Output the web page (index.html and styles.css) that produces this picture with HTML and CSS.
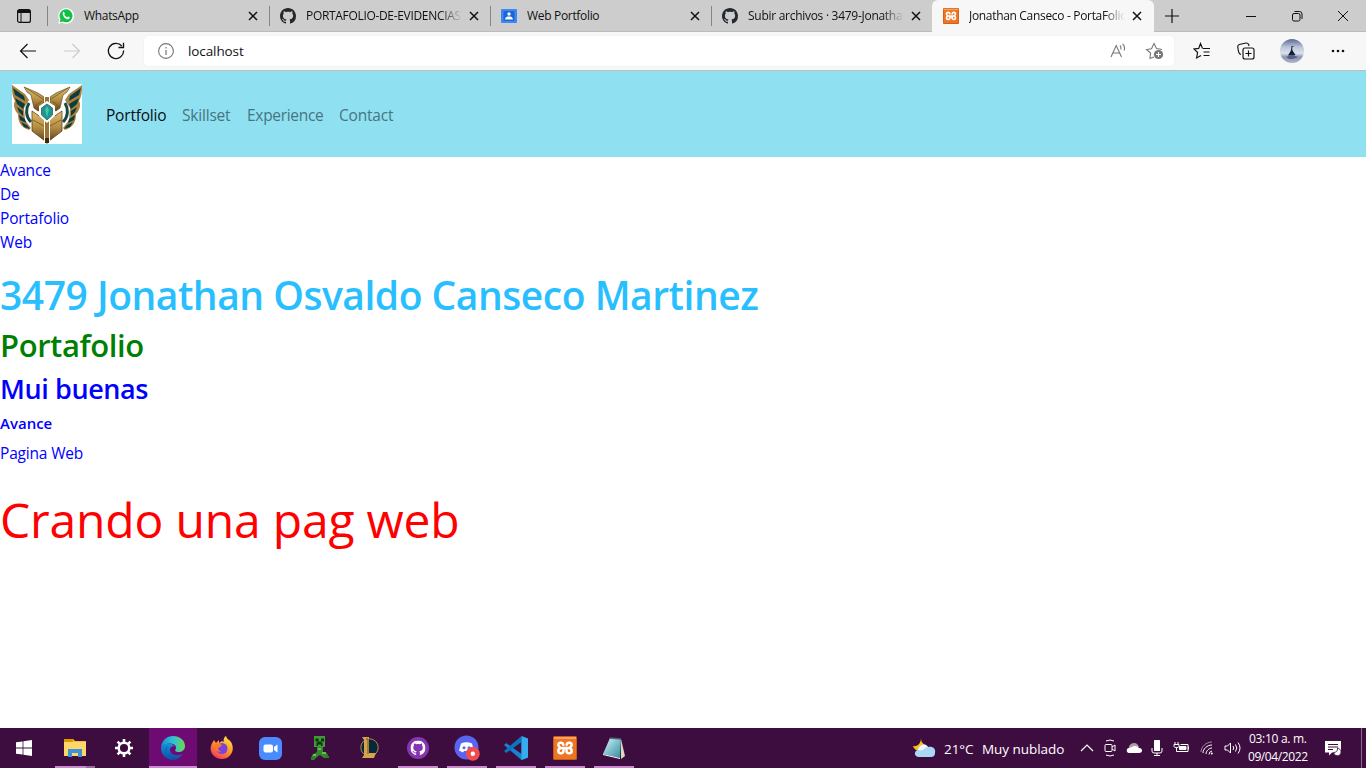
FILE: index.html
```html
<!DOCTYPE html>
<html lang="es">
<head>
<meta charset="utf-8">
<title>Jonathan Canseco - PortaFolio</title>
<link rel="stylesheet" href="styles.css">
</head>
<body>
<svg class="defs" width="0" height="0">
  <defs>
    <symbol id="github" viewBox="0 0 16 16"><path d="M8 0C3.58 0 0 3.58 0 8c0 3.54 2.29 6.53 5.47 7.59.4.07.55-.17.55-.38 0-.19-.01-.82-.01-1.49-2.01.37-2.53-.49-2.69-.94-.09-.23-.48-.94-.82-1.13-.28-.15-.68-.52-.01-.53.63-.01 1.08.58 1.23.82.72 1.21 1.87.87 2.33.66.07-.52.28-.87.51-1.07-1.78-.2-3.64-.89-3.64-3.95 0-.87.31-1.59.82-2.15-.08-.2-.36-1.02.08-2.12 0 0 .67-.21 2.2.82.64-.18 1.32-.27 2-.27s1.36.09 2 .27c1.53-1.04 2.2-.82 2.2-.82.44 1.1.16 1.92.08 2.12.51.56.82 1.27.82 2.15 0 3.07-1.87 3.75-3.65 3.95.29.25.54.73.54 1.48 0 1.07-.01 1.93-.01 2.2 0 .21.15.46.55.38A8.01 8.01 0 0 0 16 8c0-4.42-3.58-8-8-8z"/></symbol>
    <symbol id="close" viewBox="0 0 10 10"><path d="M1 1l8 8M9 1l-8 8" fill="none" stroke="#111" stroke-width="1.5"/></symbol>
    <symbol id="xampp" viewBox="0 0 24 24"><rect width="24" height="24" rx="1.500" fill="#c9581a"/><rect x="1" y="1" width="22" height="22" rx="1" fill="#ee7623"/><path d="M1 1h22v2H1z" fill="#f7a266"/><path d="M9.500 12h5M10.300 8.700C9.800 5.800 5 6.100 5.300 9c.2 1.700 1.200 2.300 2.600 3-2 .5-2.700 1.600-2.600 3.100.3 3 5.200 2.900 5.200-.3V12M13.700 8.700c.5-2.900 5.300-2.600 5 .3-.2 1.700-1.200 2.300-2.600 3 2 .5 2.700 1.600 2.600 3.100-.3 3-5.200 2.900-5.200-.3V12" fill="none" stroke="#fff" stroke-width="2.500" stroke-linejoin="round" stroke-linecap="round"/></symbol>
  </defs>
</svg>
<div class="screen">
  <div class="tabstrip">
    <div class="tabmenu"><svg width="14" height="14" viewBox="0 0 14 14"><rect x=".6" y=".6" width="12.800" height="12.800" rx="2" fill="none" stroke="#111" stroke-width="1.200"/><path d="M1 1h12v3H1z" fill="#111"/><path d="M4 4v9" stroke="#111"/></svg></div>
    <div class="tab first">
      <svg class="fav" viewBox="0 0 16 16"><path d="M.3 15.800l1-4A7.900 7.900 0 1 1 4.300 14.800z" fill="#fff"/><path d="M1.700 14.300l.8-3A6.500 6.500 0 1 1 4.800 13.500z" fill="#12c143"/><path d="M5 4.200c.4-.5 1-.4 1.200 0l.6 1.400c.1.400-.6 1-.5 1.200.7 1.300 1.500 2 2.700 2.500.4 0 .8-1 1.200-.8l1.500.8c.2.700-.4 1.800-1.600 2C7.500 11.500 3.500 7.400 5 4.200z" fill="#fff"/></svg>
      <span class="label">WhatsApp</span><svg class="x"><use href="#close"/></svg>
    </div>
    <div class="tab">
      <svg class="fav" fill="#24292f"><use href="#github"/></svg>
      <span class="label fade">PORTAFOLIO-DE-EVIDENCIAS</span><svg class="x"><use href="#close"/></svg>
    </div>
    <div class="tab">
      <svg class="fav" viewBox="0 0 16 16"><rect y="1" width="16" height="14" rx="1" fill="#4285f4"/><path d="M2.500 3h11v10h-11z" fill="#1967d2"/><circle cx="8" cy="6" r="1.700" fill="#fff"/><path d="M4 11.500c.3-2.500 2-3 4-3s3.700.5 4 3z" fill="#fff"/></svg>
      <span class="label">Web Portfolio</span><svg class="x"><use href="#close"/></svg>
    </div>
    <div class="tab last">
      <svg class="fav" fill="#24292f"><use href="#github"/></svg>
      <span class="label fade wide">Subir archivos · 3479-Jonatha</span><svg class="x"><use href="#close"/></svg>
    </div>
    <div class="tab active">
      <svg class="fav"><use href="#xampp"/></svg>
      <span class="label fade">Jonathan Canseco - PortaFolio</span><svg class="x"><use href="#close"/></svg>
    </div>
    <svg class="plus" width="16" height="16" viewBox="0 0 16 16"><path d="M8 1v14M1 8h14" stroke="#111" stroke-width="1.200"/></svg>
    <div class="winbtns">
      <svg width="12" height="12" viewBox="0 0 12 12"><path d="M1 6.500h10" stroke="#111"/></svg>
      <svg width="12" height="12" viewBox="0 0 12 12" fill="none" stroke="#111"><rect x="1.500" y="3.500" width="7.500" height="7.500" rx="1.500"/><path d="M3.500 1.500h5q2.500 0 2.500 2.500v5"/></svg>
      <svg width="12" height="12" viewBox="0 0 12 12"><path d="M1 1l10 10M11 1L1 11" stroke="#111"/></svg>
    </div>
  </div>

  <div class="toolbar">
    <div class="navicons">
      <svg width="18" height="16" viewBox="0 0 18 16" fill="none" stroke="#111" stroke-width="1.200"><path d="M8.500 1L1.500 8l7 7M1.500 8H17"/></svg>
      <svg width="18" height="16" viewBox="0 0 18 16" fill="none" stroke="#ccc" stroke-width="1.200"><path d="M9.500 1l7 7-7 7M16.500 8H1"/></svg>
      <svg width="18" height="18" viewBox="0 0 18 18" fill="none" stroke="#111" stroke-width="1.300"><path d="M16.600 8.500A7.600 7.600 0 1 1 14.800 4M16.500 .8v4.700h-5"/></svg>
    </div>
    <div class="address">
      <svg width="16" height="16" viewBox="0 0 16 16"><circle cx="8" cy="8" r="7.400" fill="none" stroke="#777" stroke-width="1.100"/><path d="M8 7v5M8 4v1.500" stroke="#777" stroke-width="1.200"/></svg>
      <span class="url">localhost</span>
      <svg class="read" width="17" height="16" viewBox="0 0 17 16" fill="none" stroke="#777" stroke-width="1.100"><path d="M1 14L6.200 2.500 11.500 14M3 10h6.700M10 2.500q1.500 1.500.8 4M12.500.8q3 2.800 1.600 6.800"/></svg>
      <svg class="staradd" width="20" height="18" viewBox="0 0 20 18" fill="none" stroke="#777" stroke-width="1.100"><path d="M9 15l-4 1.500.5-5.500L1.500 7.500l5-.8L9 1.500l2.500 5 5.500 1"/><circle cx="13.500" cy="12.500" r="4.600" fill="#777" stroke="none"/><path d="M11 12.500h5M13.500 10v5" stroke="#fff"/></svg>
    </div>
    <div class="tools">
      <svg width="18" height="18" viewBox="0 0 18 18" fill="none" stroke="#111" stroke-width="1.150"><path d="M9.500 6.500L7.500 1.500 5.700 6.400 1 7l3.600 3.500-1 5.500L8 13.500M10 6.500h7M10.500 10h6M10.500 13.500h6"/></svg>
      <svg width="18" height="18" viewBox="0 0 18 18" fill="none" stroke="#111" stroke-width="1.150"><rect x="6" y="6" width="11" height="11" rx="2"/><path d="M11.500 8.500v6M8.500 11.500h6M4 12.500C2 12 1.500 10 1.200 8L.8 5q-.2-2 1.500-2.500L9 1q2-.2 2.600 1.500l.5 1.500"/></svg>
      <svg class="avatar" width="24" height="24" viewBox="0 0 24 24"><defs><linearGradient id="sky" x2="0" y2="1"><stop stop-color="#5c6a94"/><stop offset=".35" stop-color="#bdc7dc"/><stop offset=".6" stop-color="#dce0ea"/><stop offset=".75" stop-color="#8d96b2"/><stop offset="1" stop-color="#adb4ca"/></linearGradient></defs><circle cx="12" cy="12" r="12" fill="url(#sky)"/><path d="M11.500 7l2.500.5-2 1 .5 3 3 4.500-7.500.500 3-5z" fill="#131b33"/><path d="M6 18l6-2.500 6 2.500-5 2H9z" fill="#56618a"/></svg>
      <svg width="14" height="4" viewBox="0 0 14 4" fill="#111"><circle cx="2" cy="2" r="1.300"/><circle cx="7" cy="2" r="1.300"/><circle cx="12" cy="2" r="1.300"/></svg>
    </div>
  </div>

  <nav class="navbar">
    <svg class="logo" width="70" height="60" viewBox="0 0 70 60">
      <defs><linearGradient id="gold" x2="0" y2="1"><stop stop-color="#dfbd6c"/><stop offset=".55" stop-color="#b38c42"/><stop offset="1" stop-color="#61431a"/></linearGradient></defs>
      <path d="M0 0h70v60H0z" fill="#fff"/>
      <g id="wing">
        <path d="M0 1l13 9 4 6-5 8 1 12 6 8-2 2C8 43 6 37 6 30 2 26 1 20 3 17 0 12 0 6 0 1z" fill="#ab8140"/>
        <path d="M1 4l11 8 1 5L3 11zM3 14l10 6-2 5L5 20zM5 23l6 4v5L7 28zM7 31l6 4 1 4-6-3zM9 38l6 3 3 4-6-2z" fill="#0b3d3e"/>
        <path d="M17 19c-3 5-4 13 2 19" fill="none" stroke="#174946" stroke-width="3"/>
        <path d="M12 3l14 6 6 4v11l-6 3-4-3-3-13-4-3z" fill="url(#gold)" stroke="#493719" stroke-width=".6"/>
        <path d="M20 27l13 9v21L20 47z" fill="url(#gold)" stroke="#49300f" stroke-width=".7"/>
        <path d="M21 36l11 6M14 4l14 9 4 3M22 23l8-6" fill="none" stroke="#755622" stroke-width=".8"/>
      </g>
      <use href="#wing" transform="matrix(-1 0 0 1 70 0)"/>
      <path d="M32 10h6v8h-6zM32 36h6v21l-3 3-3-3z" fill="#fff"/><path d="M33 13h4v45l-2 2-2-2z" fill="#9b7434"/>
      <path d="M18 23l17 13 17-13" fill="none" stroke="#fff" stroke-width="1.500"/>
      <path d="M35 17l8 5v10l-8 7-8-7V22z" fill="#fff"/><path d="M35 20l5.500 4v7L35 36l-5.500-5v-7z" fill="#169a8f" stroke="#52706a"/><path d="M35 22l2 4-2 7-2-7z" fill="#4cc0ad"/><path d="M33 54h4v5h-4z" fill="#3d2912"/>
    </svg>
    <span class="navlink on n1">Portfolio</span><span class="navlink n2">Skillset</span><span class="navlink n3">Experience</span><span class="navlink n4">Contact</span>
  </nav>

  <main class="page">
    <p class="intro">Avance<br>De<br>Portafolio<br>Web</p>
    <h1>3479 Jonathan Osvaldo Canseco Martinez</h1>
    <h2>Portafolio</h2>
    <h3>Mui buenas</h3>
    <h6>Avance</h6>
    <p class="sub">Pagina Web</p>
    <p class="big">Crando una pag web</p>
  </main>

  <footer class="taskbar">
    <div class="apps">
      <div class="app"><svg width="16" height="16" viewBox="0 0 16 16" fill="#fff"><path d="M0 2.300L6.600 1.400v6.200H0zM7.400 1.300L16 0v7.600H7.400zM0 8.400h6.600v6.200L0 13.700zM7.400 8.400H16V16l-8.600-1.300z"/></svg></div>
      <div class="app run files"><svg width="22" height="20" viewBox="0 0 22 20"><path d="M0 1h9l2 2h11v15H0z" fill="#f5bd3b"/><path d="M0 1h9.500l-1 3H0z" fill="#df9800"/><path d="M0 4h22v14H0z" fill="#ffd768"/><path d="M4 19v-8h14v8h-4v-4H8v4z" fill="#3b94db"/></svg></div>
      <div class="app"><svg width="20" height="20" viewBox="0 0 20 20"><circle cx="10" cy="10" r="5.300" fill="none" stroke="#fff" stroke-width="2.500"/><path d="M10 1v4M10 15v4M1 10h4M15 10h4M3.600 3.600l3 3M13.400 13.400l3 3M16.400 3.600l-3 3M6.600 13.400l-3 3" stroke="#fff" stroke-width="2.600"/></svg></div>
      <div class="app run edge"><svg width="24" height="24" viewBox="0 0 24 24"><defs><linearGradient id="e1" x2="1"><stop stop-color="#178fcd"/><stop offset=".5" stop-color="#31bfd9"/><stop offset="1" stop-color="#6bd94b"/></linearGradient><linearGradient id="e2" x2="0" y2="1"><stop stop-color="#1594dc"/><stop offset="1" stop-color="#0d4ca3"/></linearGradient></defs><path d="M0 12C.5 4 6 0 12 0c7 0 12 4.500 12 10 0 4-3 6-6.500 6-3 0-4-1.200-3-2.500 1.500-2 0-6-5-6C5 7.500 1 9 0 12z" fill="url(#e1)"/><path d="M0 12c1-3.500 5-5 8.500-4.500 2.500.3 4.500 1.500 5 3-2.500-1-4.500 1-4.500 3.500 0 4 5 7 12.500 4C19 22 15.500 24 12 24 5 24 0 19 0 12z" fill="url(#e2)"/><path d="M7.500 9.500C4 13 5.500 21 12 24 4 22 2 12 7.500 9.500z" fill="#1263b5"/></svg></div>
      <div class="app"><svg width="24" height="24" viewBox="0 0 24 24"><defs><linearGradient id="ff" x1=".8" x2=".2" y2="1"><stop stop-color="#ffe742"/><stop offset=".45" stop-color="#ff9a26"/><stop offset="1" stop-color="#f4315d"/></linearGradient></defs><path d="M4 4l2 3 3-3v3c2-2 4-2 5-1-1-2 0-5 2-6 1 4 5 4 6 8 3 8-3 15-10 15S-1 17 1 10c.5-2.500 2-4 3-6z" fill="url(#ff)"/><circle cx="12" cy="12.500" r="5.500" fill="#7a42d8"/><path d="M5 8c3-1 6 0 7 1-1 2-3 2-4 3 0 2 2 4 4 4-5 1-8-4-7-8z" fill="#ff792e"/></svg></div>
      <div class="app"><svg width="23" height="23" viewBox="0 0 23 23"><rect width="23" height="23" rx="6" fill="#4a8cff"/><rect x="4.500" y="7.500" width="9.500" height="8" rx="2" fill="#fff"/><path d="M15 10l3.500-2.500v8L15 13z" fill="#fff"/></svg></div>
      <div class="app"><svg width="20" height="24" viewBox="0 0 20 24"><path d="M4 0h11v11H4z" fill="#3c9d35"/><path d="M5.500 2.500h3v3h-3zM11 2.500h3v3h-3zM8 5.500h3v1h1.500V10H11V8.500H8V10H6.500V6.500H8z" fill="#102c11"/><path d="M7 11h6v5l5 2-1 4h-3l-4-3-3 2-3 3H1l1-5 5-3z" fill="#35862e"/><path d="M3 19h3M12 17h4M8 13h3" stroke="#67bf51" stroke-width="2"/><path d="M1 22h4M15 21h4" stroke="#2f7d2d" stroke-width="2"/></svg></div>
      <div class="app"><svg width="20" height="22" viewBox="0 0 20 22"><circle cx="10.500" cy="10.500" r="8.700" fill="#07273a" stroke="#b58e43" stroke-width="1"/><path d="M3 0h7v16h7l-2 5H3l2-3V3z" fill="#d4a54d"/><path d="M7 2h2v15" fill="none" stroke="#765222"/></svg></div>
      <div class="app run"><svg width="22" height="22" viewBox="0 0 22 22"><circle cx="11" cy="11" r="11" fill="#8635b1"/><g fill="#fff"><use href="#github" x="3.500" y="3.500" width="15" height="15"/></g></svg></div>
      <div class="app run"><svg width="26" height="26" viewBox="0 0 26 26"><circle cx="12.500" cy="12.500" r="12" fill="#5865f2"/><path d="M7 8.500q5.500-2.500 11 0l2 7-4 2-1-1.500h-5L9 17.500l-4-2z" fill="#fff"/><circle cx="10" cy="12.700" r="1.500" fill="#5865f2"/><circle cx="15" cy="12.700" r="1.500" fill="#5865f2"/><circle cx="18.800" cy="18.800" r="7" fill="#ed4f50"/><circle cx="18.800" cy="18.800" r="2.200" fill="#fff"/></svg></div>
      <div class="app run"><svg width="24" height="24" viewBox="0 0 24 24"><path d="M17.500 6v12L2.300 7 0 9l17.500 15 6.500-2.500v-19z" fill="#1684ce"/><path d="M17.500 0v6L2.300 17 0 15z" fill="#0875bc"/><path d="M17.500 0L24 2.500v19L17.500 24z" fill="#35acef"/></svg></div>
      <div class="app run"><svg width="24" height="24"><use href="#xampp"/></svg></div>
      <div class="app run"><svg width="22" height="22" viewBox="0 0 22 22"><defs><linearGradient id="np" x2="1" y2="1"><stop stop-color="#dff7fa"/><stop offset=".5" stop-color="#81c1ce"/><stop offset="1" stop-color="#37889b"/></linearGradient></defs><path d="M18 2l4 17-4 3z" fill="#ddd9bd"/><path d="M7 1l11 1-1 19L0 17z" fill="url(#np)"/><path d="M0 17l17 4v1L0 18z" fill="#f8ffff"/><path d="M7 1l11 1" stroke="#48636b" stroke-width="1.500"/></svg></div>
    </div>
    <div class="weather">
      <svg width="23" height="20" viewBox="0 0 23 20"><path d="M8 0c0 4 2 6 5 7l-4 7-4-1C3 12 1 11 0 8c5 1 8-3 8-8z" fill="#fcc21b"/><path d="M6 19C1 19 .5 13 5 12c0-5 7-8 10-3 5-1 8 2 7 6 0 3-2 4-4 4z" fill="#acd7f5"/><path d="M5 12c1-5 7-7 10-3-4 0-4 5-10 3z" fill="#eff9ff"/></svg>
      <span class="temp">21°C</span><span class="cond">Muy nublado</span>
    </div>
    <div class="tray">
      <svg width="14" height="8" viewBox="0 0 14 8"><path d="M1 7l6-6 6 6" fill="none" stroke="#fff" stroke-width="1.200"/></svg>
      <svg width="12" height="18" viewBox="0 0 12 18" fill="none" stroke="#fff"><rect x="1" y="5.500" width="7" height="7" rx="1"/><path d="M8 8l3-2v6l-3-2M2 2q4-2 8 0M2 16q4 2 8 0"/></svg>
      <svg width="16" height="12" viewBox="0 0 16 12"><path d="M3 7C2 4 5 1 8 1s4 2 5 4z" fill="#aaa0aa"/><path d="M3 11C0 11 0 6 3 6l3-1c2-2 6-1 7 1 4 0 4 5 0 5z" fill="#fff"/></svg>
      <svg width="12" height="16" viewBox="0 0 12 16"><rect x="3" width="6" height="11" rx=".5" fill="#fff"/><path d="M1 8v3q0 2 2 2h6q2 0 2-2V8M6 13v2M3 15.500h6" fill="none" stroke="#fff"/></svg>
      <svg width="17" height="14" viewBox="0 0 17 14" fill="none" stroke="#fff"><path d="M2 1v2M5 1v2M1 3.500h5v2q0 1-2.500 1-2.500 0-2.500-1zM3.500 6.500v4H15v-7H7.500M15.500 5.500v3"/><path d="M6.500 5.500h6.500v3H6.500z" fill="#fff"/></svg>
      <svg width="14" height="14" viewBox="0 0 14 14" fill="none" stroke="#fff"><path d="M1 11C1 6 6 1 12 1" stroke="#a08ca2"/><path d="M3 12c0-4 4-8 9-8M6 13c0-3 3-6 6-6M9 13.500q0-3 3-3.500"/><circle cx="11.800" cy="12.500" r="1" fill="#fff" stroke="none"/></svg>
      <svg width="17" height="14" viewBox="0 0 17 14" fill="none" stroke="#fff"><path d="M1 5h2.500l3-3v10l-3-3H1zM9 5q1.500 2 0 4M11.500 3.500q2.500 3.500 0 7M14 1.500q4 5.500 0 11"/></svg>
    </div>
    <div class="clock"><span class="time">03:10 a. m.</span><span class="date">09/04/2022</span></div>
    <svg class="notif" width="17" height="17" viewBox="0 0 17 17"><path d="M0 1h16v11.500H7l-3 3v-3H0z" fill="#fff"/><path d="M3 4.500h10M3 7h10M3 9.500h5" stroke="#3d0d3e"/><path d="M12.500 8c.5 3-1.500 4.500-4 4.500q1.500 4 5.500 3c3-2 2.500-6.500-1.500-7.500z" fill="#fff" stroke="#3d0d3e" stroke-width=".8"/></svg>
  </footer>
</div>
</body>
</html>
```
FILE: styles.css
```css
* { box-sizing: border-box; }
body { margin: 0; background: #fff; font-family: "Open Sans", "Noto Sans", sans-serif; }
.defs { display: block; height: 0; }
svg { flex: none; }
.screen { width: 1366px; height: 768px; display: flex; flex-direction: column; overflow: hidden; }

/* Browser tabs */
.tabstrip { height: 32px; background: #cdcdcd; display: flex; align-items: stretch; border-bottom: 1px solid #bbb; }
.tabmenu { width: 48px; display: flex; align-items: center; padding: 0 0 0 17px; }
.tab { width: 221px; height: 32px; display: flex; align-items: center; padding: 0 12px 0 10px; position: relative; }
.tab.first { width: 222px; }
.tab.last { width: 220px; padding-right: 11px; }
.tab::before { content: ""; position: absolute; left: -1px; top: 6px; width: 1px; height: 20px; background: #858585; }
.tab.active { width: 222px; background: #f7f7f7; border-radius: 6px 6px 0 0; padding: 0 12px 0 11px; }
.tab.active::before { display: none; }
.fav { width: 16px; height: 16px; margin-right: 10px; }
.label { flex: none; width: 156px; font-size: 12px; line-height: 16px; white-space: nowrap; overflow: hidden; color: #111; letter-spacing: -.32px; }
.label.wide { letter-spacing: -.28px; }
.fade { -webkit-mask-image: linear-gradient(90deg, #000 86%, transparent); mask-image: linear-gradient(90deg, #000 86%, transparent); }
.x { width: 10px; height: 10px; margin-left: auto; }
.plus { align-self: center; margin-left: 10px; }
.winbtns { margin-left: auto; display: flex; align-items: center; gap: 34px; padding-right: 17px; }

/* Address bar */
.toolbar { height: 39px; background: #f7f7f7; border-bottom: 1px solid #bfbfbf; display: flex; align-items: center; }
.navicons { width: 144px; display: flex; align-items: center; gap: 26px; padding-left: 19px; }
.address { width: 1030px; height: 30px; background: #fff; border-radius: 4px; display: flex; align-items: center; padding: 0 9px 0 14px; box-shadow: 0 0 1px #ddd; }
.url { font-size: 13.5px; letter-spacing: -.1px; margin-left: 14px; color: #111; }
.read { margin-left: auto; }
.staradd { margin-left: 18px; }
.tools { display: flex; align-items: center; padding-left: 19px; gap: 26px; }
.avatar { margin: 0 1px 0 -1px; }

/* Site navigation */
.navbar { height: 86px; background: #8fe1f2; display: flex; align-items: center; padding-left: 12px; }
.logo { margin-right: 24px; }
.navlink { font-size: 15.5px; letter-spacing: -.2px; line-height: 24px; padding-top: 1px; margin-right: 16px; color: #467580; white-space: nowrap; }
.navlink.on { color: #081012; }
.n1 { width: 60px; } .n2 { width: 49px; } .n3 { width: 76px; letter-spacing: -.3px; } .n4 { width: 56px; }

/* Page body */
.page { flex: 1; color: #00f; font-size: 15.5px; letter-spacing: -.18px; line-height: 24px; }
.page p, .page h1, .page h2, .page h3, .page h6 { margin: 0; white-space: nowrap; }
.page .intro { height: 97px; padding-top: 1px; }
.page h1 { margin-top: 17px; font-size: 39px; letter-spacing: -.48px; line-height: 48px; font-weight: 600; color: #29bfff; }
.page h2 { margin-top: 7px; font-size: 31px; letter-spacing: -.42px; line-height: 38px; font-weight: 600; color: #008000; }
.page h3 { margin-top: 8px; font-size: 27px; letter-spacing: -.4px; line-height: 34px; font-weight: 600; }
.page h6 { margin-top: 8px; font-size: 15px; letter-spacing: 0; line-height: 19px; font-weight: 600; }
.page .sub { margin-top: 8px; }
.page .big { margin-top: 19px; font-size: 48px; letter-spacing: -.18px; line-height: 72px; color: #f00; }

/* Taskbar */
.taskbar { height: 40px; background: #3e0d3f; color: #fff; display: flex; align-items: center; position: relative; }
.apps { display: flex; height: 40px; padding-left: 1px; }
.app { width: 49px; display: flex; align-items: center; justify-content: center; position: relative; }
.app:first-child { padding-right: 3px; }
.app.run::after { content: ""; position: absolute; left: 5px; right: 4px; bottom: 0; height: 2px; background: #cb87d0; }
.app.files::after { background: linear-gradient(90deg, #cb87d0 31px, #9b6aa1 31px); }
.app.edge { background: linear-gradient(90deg, transparent 1px, #6d0b72 1px); }
.app.edge::after { left: 1px; right: 0; }
.weather { margin-left: 275px; width: 167px; display: flex; align-items: center; font-size: 13.5px; letter-spacing: -.05px; white-space: nowrap; }
.weather span { padding-top: 1px; }
.temp { margin-left: 8px; width: 38px; }
.tray { display: flex; align-items: center; gap: 9.8px; }
.clock { display: flex; flex-direction: column; align-items: center; width: 60px; margin-left: 7px; font-size: 12px; letter-spacing: -.4px; line-height: 18px; white-space: nowrap; }
.time { letter-spacing: -.3px; }
.notif { margin-left: 17px; }
.taskbar::after { content: ""; position: absolute; right: 4px; top: 0; width: 1px; height: 40px; background: #8a6b8c; }
```
